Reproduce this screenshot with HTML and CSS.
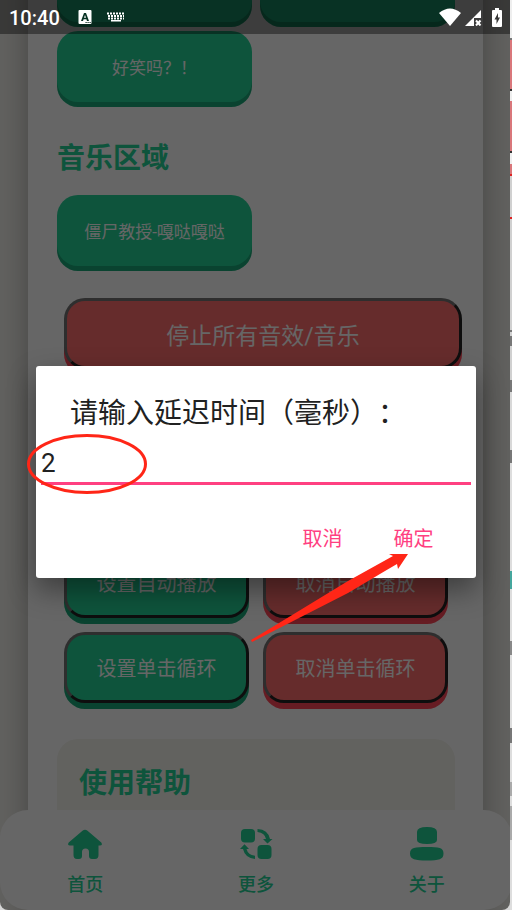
FILE: index.html
```html
<!DOCTYPE html>
<html lang="zh-CN">
<head>
<meta charset="utf-8">
<meta name="viewport" content="width=device-width, initial-scale=1">
<title>音效</title>
<link rel="stylesheet" href="styles.css">
</head>
<body>
<div class="phone">
  <main class="page">
    <section class="card">
      <div class="sounds">
        <button class="sound" type="button"></button>
        <button class="sound" type="button"></button>
        <button class="sound" type="button">好笑吗？！</button>
      </div>
      <h2 class="heading">音乐区域</h2>
      <div class="sounds">
        <button class="sound" type="button">僵尸教授-嘎哒嘎哒</button>
      </div>
      <div class="controls">
        <button class="control stop" type="button">停止所有音效/音乐</button>
        <button class="control" type="button">设置自动播放</button>
        <button class="control danger" type="button">取消自动播放</button>
        <button class="control" type="button">设置单击循环</button>
        <button class="control danger" type="button">取消单击循环</button>
      </div>
      <section class="help"><h2 class="heading">使用帮助</h2></section>
    </section>
  </main>
  <nav class="tabs">
    <a class="tab" href="#home">
      <svg class="tab-icon" viewBox="0 0 36 36"><path d="M15.500 3.800Q18 1.800 20.500 3.800L34.300 15.500Q36 18.500 33 18.500H31.500V28Q31.500 32 28 32H25Q22 32 22 29V25Q22 21.500 18.500 21.500Q15 21.500 15 25V29Q15 32 12 32H10Q6.500 32 6.500 28V18.500H3Q0 18.500 1.700 15.500Z"/></svg>
      <span>首页</span>
    </a>
    <a class="tab" href="#more">
      <svg class="tab-icon" viewBox="0 0 36 36"><rect x="3" y="2" width="14" height="13.500" rx="4"/><rect x="19.500" y="18" width="14" height="14" rx="4"/><path d="M19.500 2Q30 2.500 32 12H34.500L29.500 16.500L25 12H28Q27 6 19.500 5ZM17 32Q7 31 5 22H2L6.500 17.200L11 22H8.500Q10 28 17 28.800Z"/></svg>
      <span>更多</span>
    </a>
    <a class="tab" href="#about">
      <svg class="tab-icon" viewBox="0 0 36 36"><path d="M8 5Q8 0 18 0Q28 0 28 5V13Q28 17 18 17Q8 17 8 13ZM18 20C30 20 34.500 20.500 34.500 26.500C34.500 32.500 30 33.500 18 33.500C6 33.500 1 32.500 1 26.500C1 20.500 6 20 18 20Z"/></svg>
      <span>关于</span>
    </a>
  </nav>
  <div class="scrim">
    <form class="dialog" role="dialog" aria-labelledby="delay-label">
      <label class="dialog-title" id="delay-label" for="delay">请输入延迟时间（毫秒）：</label>
      <input class="dialog-input" id="delay" type="text" inputmode="numeric" value="2">
      <div class="dialog-actions">
        <button class="dialog-button" type="button">取消</button>
        <button class="dialog-button" type="button">确定</button>
      </div>
      <svg class="ring" viewBox="0 0 122 60"><ellipse cx="61" cy="30" rx="58.500" ry="28.500"/></svg>
      <svg class="arrow" viewBox="0 0 158 90"><path d="M1 87L98 28L143 3L139 1L158 1L148 16L147 11L135 18L98 40L2 89Z"/></svg>
    </form>
  </div>
  <header class="status">
    <span class="clock">10:40</span>
    <svg class="status-icon input-icon" viewBox="0 0 14 16"><path fill-rule="evenodd" d="M1.500 1H12.500Q13.500 1 13.500 2V14Q13.500 15 12.500 15H1.500Q.5 15 .5 14V2Q.5 1 1.500 1ZM6 4L3 12H5L5.600 10.200H8.400L9 12H11L8 4ZM7 6L8 8.800H6ZM7.500 13V14H8.700V13ZM9.500 13V14H10.700V13ZM11.500 13V14H12.700V13Z"/></svg>
    <svg class="status-icon keys-icon" viewBox="0 0 18 10"><path class="keys" d="M0 1.500H18M1 4H17M1 6.500H17"/><path d="M4 8H14V9.500H4Z"/></svg>
    <span class="spacer"></span>
    <svg class="status-icon wifi-icon" viewBox="0 0 22 18"><path d="M0 5Q11-4 22 5L11 18Z"/></svg>
    <svg class="status-icon signal-icon" viewBox="0 0 17 17"><path d="M0 17L16 1V9H9V17Z"/><path class="cross" d="M11 11.500L15.500 16.500M15.500 11.500L11 16.500"/></svg>
    <svg class="status-icon battery-icon" viewBox="0 0 10 19"><path fill-rule="evenodd" d="M3 0H7V2H9Q10 2 10 3V18Q10 19 9 19H1Q0 19 0 18V3Q0 2 1 2H3ZM6 5L2.500 11.500H4.500V16L8 9.500H6Z"/></svg>
  </header>
</div>
<aside class="edge"></aside>
</body>
</html>
```

FILE: styles.css
```css
* { box-sizing: border-box; }

body {
  margin: 0;
  height: 100vh;
  display: flex;
  overflow: hidden;
  background: #d6d6d6;
  font-family: Roboto, "Noto Sans CJK SC", sans-serif;
  text-spacing-trim: space-all;
}

button { font: inherit; cursor: pointer; }

.phone {
  position: relative;
  flex: 1;
  height: 100%;
  overflow: hidden;
  border-radius: 0 0 8px 8px;
  background: #f3f2ed;
}

.edge {
  width: 2px;
  background: linear-gradient(
    #eee 0 38px, #777 38px 40px, #d9777b 40px 89px, #333 89px 91px,
    #eee 91px 101px, #d9777b 101px 151px, #333 151px 153px, #eee 153px 164px,
    #d9777b 164px 174px, #d22 174px 176px, #d0d0d0 176px 217px, #d22 217px 219px,
    #d0d0d0 219px 330px, #777 330px 332px, #d0d0d0 332px 336px, #777 336px 346px,
    #d0d0d0 346px 380px, #777 380px 392px, #d8d8d8 392px 450px, #777 450px 463px,
    #ddd 463px 571px, #45a69d 571px 589px, #ddd 589px 641px,
    #888 641px 655px, #ddd 655px 728px, #777 728px 743px, #ddd 743px 782px,
    #aaa 782px 796px, #ddd 796px 806px, #aaa 806px 840px, #ddd 840px);
}

.page { height: 100%; overflow: hidden; padding: 0 27px 0 28px; }

.card {
  min-height: 100%;
  padding: 0 28px 0 29px;
  margin-top: -49px;
  background: #fff;
  box-shadow: 0 0 28px rgba(0, 0, 0, .3);
}

.sounds { display: grid; grid-template-columns: 1fr 1fr; gap: 9px 8px; }

.sound {
  height: 71px;
  padding: 0;
  border: 0;
  border-radius: 21px;
  background: #23d296;
  box-shadow: 0 5px #1ba878;
  color: #fff;
  font-size: 17px;
}

.heading {
  margin: 0;
  color: #23d296;
  font-size: 28px;
  font-weight: 700;
  line-height: 42px;
}

.card > .heading { margin: 36px 0 15px; }

.controls {
  display: grid;
  grid-template-columns: 1fr 1fr;
  gap: 14px;
  margin: 32px 7px 36px;
}

.control {
  height: 71px;
  padding: 0;
  border: 3px solid;
  border-color: #737373 #242424 #242424 #737373;
  border-radius: 21px;
  background: #23d296;
  box-shadow: 0 6px #1ba878;
  color: #fff;
  font-size: 20px;
}

.stop {
  grid-column: 1 / -1;
  margin: 0 -14px 164px 0;
  font-size: 23px;
}

.stop, .danger { background: #ff6e6e; box-shadow: 0 6px #ff4757; }

.help {
  height: 180px;
  padding: 24px 22px;
  border-radius: 21px;
  background: #f5f4ed;
}

.tabs {
  position: absolute;
  inset: auto -2px 0 0;
  display: grid;
  grid-template-columns: repeat(3, 1fr);
  height: 100px;
  padding-top: 17px;
  border-radius: 28px;
  background: #fff;
}

.tab {
  display: flex;
  flex-direction: column;
  align-items: center;
  gap: 9px;
  color: #23d296;
  font-size: 18px;
  font-weight: 500;
  line-height: 26px;
  text-decoration: none;
}

.tab-icon { width: 36px; height: 36px; fill: currentColor; }

.scrim {
  position: absolute;
  inset: 0;
  display: grid;
  align-items: center;
  padding: 34px 34px 0 36px;
  background: rgba(0, 0, 0, .6);
}

.dialog {
  position: relative;
  padding: 27px 5px 20px;
  border-radius: 3px;
  background: #fff;
  box-shadow: 0 12px 28px rgba(0, 0, 0, .4);
}

.dialog-title {
  display: block;
  padding-left: 29px;
  color: #212121;
  font-size: 28px;
  line-height: 42px;
  white-space: nowrap;
}

.dialog-input {
  display: block;
  width: 100%;
  height: 50px;
  padding: 9px 0 0;
  border: 0;
  border-bottom: 3px solid #ff4081;
  outline: 0;
  background: transparent;
  color: #212121;
  font: inherit;
  font-size: 26px;
}

.dialog-actions {
  display: flex;
  justify-content: flex-end;
  gap: 12px;
  margin-top: 31px;
  padding-right: 18px;
}

.dialog-button {
  width: 79px;
  height: 42px;
  padding: 0;
  border: 0;
  background: transparent;
  color: #ff4081;
  font-size: 20px;
}

.ring, .arrow { position: absolute; pointer-events: none; }

.ring {
  left: -10px;
  top: 68px;
  width: 122px;
  height: 60px;
  fill: none;
  stroke: #ff2617;
  stroke-width: 3;
}

.arrow {
  right: 68px;
  top: 187px;
  width: 158px;
  height: 90px;
  fill: #ff2617;
}

.status {
  position: absolute;
  inset: 0 0 auto;
  display: flex;
  align-items: center;
  height: 34px;
  padding: 0 8px 0 9px;
  background: rgba(0, 0, 0, .4);
  color: #fff;
}

.clock { font-size: 20px; font-weight: 500; line-height: 34px; padding-top: 1px; }
.spacer { flex: 1; }
.status-icon { fill: #fff; }
.input-icon { width: 14px; height: 16px; margin-left: 18px; }
.keys-icon { width: 18px; height: 10px; margin-left: 15px; }
.keys { stroke: #fff; stroke-width: 2; stroke-dasharray: 2 1; }
.wifi-icon { width: 22px; height: 18px; }
.signal-icon { width: 17px; height: 17px; margin-left: 4px; }
.cross { stroke: #fff; stroke-width: 2; }
.battery-icon { width: 10px; height: 19px; margin-left: 10px; }
```
